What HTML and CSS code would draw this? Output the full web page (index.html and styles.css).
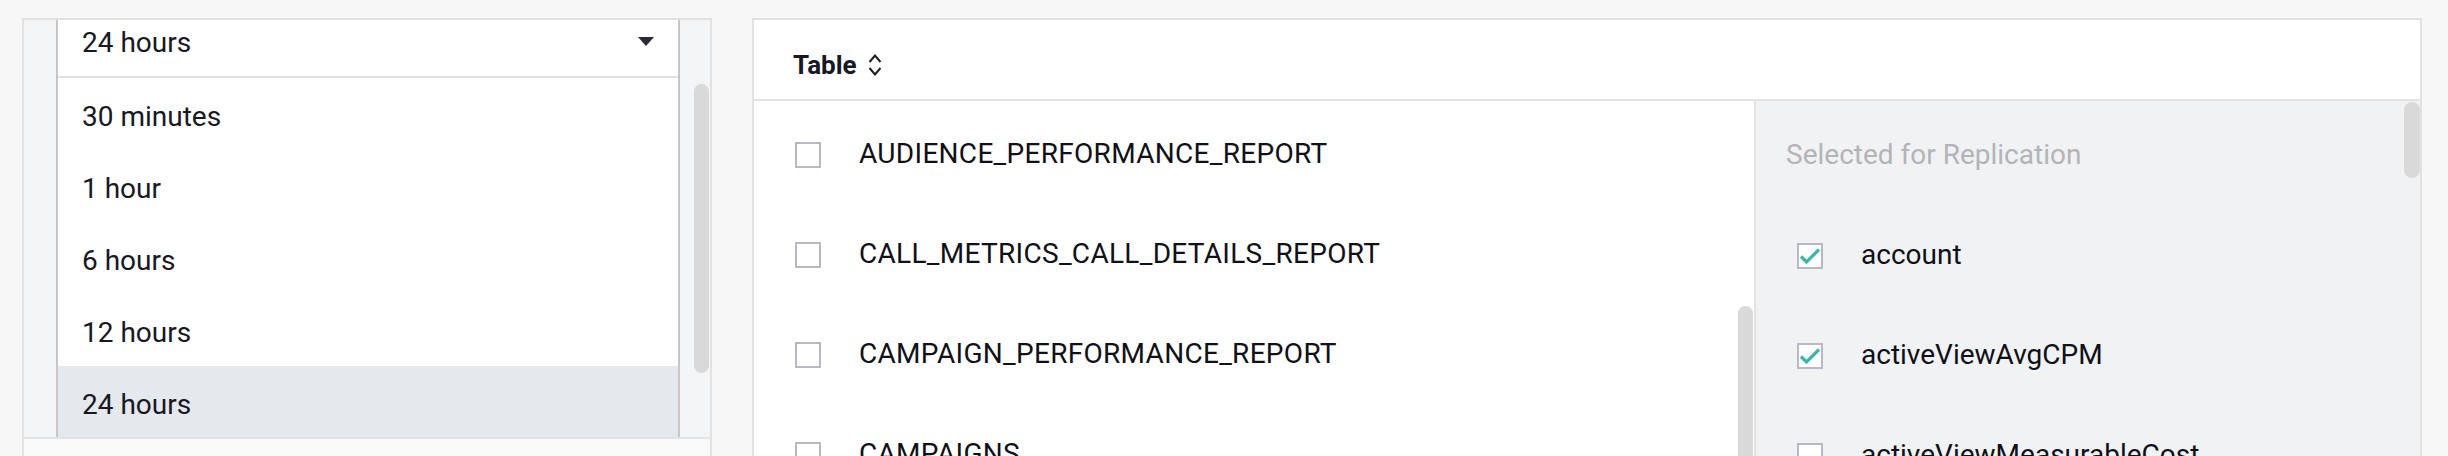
FILE: index.html
```html
<!DOCTYPE html>
<html>
<head>
    <title>Replication Settings</title>
    <link rel="stylesheet" href="styles.css">
</head>
<body>
    <div class="page">
        <div class="side-column">
            <div class="range-panel">
                <div class="range-scroll">
                    <div class="range-gutter"></div>
                    <div class="range-select">
                        <div class="select-head">
                            <span>24 hours</span>
                            <svg class="select-caret" width="16" height="10" viewBox="0 0 16 10"><path d="M0 0 H16 L8 9 Z" fill="#2b2b38"/></svg>
                        </div>
                        <div class="select-option">30 minutes</div>
                        <div class="select-option">1 hour</div>
                        <div class="select-option">6 hours</div>
                        <div class="select-option">12 hours</div>
                        <div class="select-option selected">24 hours</div>
                    </div>
                    <div class="range-track">
                        <div class="thumb range-thumb"></div>
                    </div>
                </div>
            </div>
            <div class="panel-foot"></div>
        </div>

        <div class="table-panel">
            <div class="table-head">
                <span>Table</span>
                <svg class="sort-icon" width="16" height="26" viewBox="0 0 16 26"><path d="M2.5 10 L8 3.5 L13.5 10 M2.5 16 L8 22.5 L13.5 16" fill="none" stroke="#1c1c28" stroke-width="2"/></svg>
            </div>
            <div class="table-body">
                <div class="table-list">
                    <div class="rows">
                        <div class="row"><span class="box"></span><span class="upper">AUDIENCE_PERFORMANCE_REPORT</span></div>
                        <div class="row"><span class="box"></span><span class="upper">CALL_METRICS_CALL_DETAILS_REPORT</span></div>
                        <div class="row"><span class="box"></span><span class="upper">CAMPAIGN_PERFORMANCE_REPORT</span></div>
                        <div class="row"><span class="box"></span><span class="upper">CAMPAIGNS</span></div>
                    </div>
                    <div class="list-track">
                        <div class="thumb list-thumb"></div>
                    </div>
                </div>
                <div class="field-pane">
                    <div class="rows">
                        <div class="row pane-title">Selected for Replication</div>
                        <div class="row"><span class="box checked"><svg width="22" height="22" viewBox="0 0 22 22"><path d="M2 11.5 L7.5 17 L20 4.5" fill="none" stroke="#3bb7a9" stroke-width="3.2"/></svg></span><span>account</span></div>
                        <div class="row"><span class="box checked"><svg width="22" height="22" viewBox="0 0 22 22"><path d="M2 11.5 L7.5 17 L20 4.5" fill="none" stroke="#3bb7a9" stroke-width="3.2"/></svg></span><span>activeViewAvgCPM</span></div>
                        <div class="row"><span class="box"></span><span>activeViewMeasurableCost</span></div>
                    </div>
                    <div class="pane-track">
                        <div class="thumb pane-thumb"></div>
                    </div>
                </div>
            </div>
        </div>
    </div>
</body>
</html>
```

FILE: styles.css
```css
body {
    margin: 0;
    background-color: #f7f7f7;
    font-family: Roboto, "Noto Sans", sans-serif;
    color: #181824;
    overflow: hidden;
}
.page {
    display: flex;
    gap: 40px;
    height: 456px;
    padding: 18px 26px 0 22px;
    box-sizing: border-box;
    overflow: hidden;
}
.side-column {
    width: 690px;
    flex-shrink: 0;
    display: flex;
    flex-direction: column;
}
.range-panel {
    border: 2px solid #e2e2e2;
    background-color: #f4f5f7;
    height: 421px;
    box-sizing: border-box;
}
.range-scroll {
    display: flex;
    height: 100%;
    overflow: hidden;
}
.range-gutter {
    width: 32px;
    flex-shrink: 0;
}
.range-select {
    width: 624px;
    flex-shrink: 0;
    margin-top: -16px;
    background-color: white;
    border-left: 2px solid #c6c6c6;
    border-right: 2px solid #c6c6c6;
    box-sizing: border-box;
    align-self: flex-start;
}
.select-head,
.select-option {
    height: 72px;
    display: flex;
    align-items: center;
    padding: 4px 24px 0 24px;
    box-sizing: border-box;
    font-size: 28px;
}
.select-head {
    height: 74px;
    justify-content: space-between;
    border-bottom: 2px solid #e0e0e0;
}
.select-option.selected {
    background-color: #e5e8ec;
}
.range-track {
    width: 30px;
    flex-shrink: 0;
}
.thumb {
    background-color: #d9d9d9;
    border-radius: 8px;
}
.range-thumb {
    width: 15px;
    height: 289px;
    margin: 64px 0 0 14px;
}
.panel-foot {
    flex: 1;
    border-left: 2px solid #e2e2e2;
    border-right: 2px solid #e2e2e2;
    background-color: #f9f9f9;
}
.table-panel {
    flex: 1;
    border: 2px solid #e2e2e2;
    border-bottom: none;
    background-color: white;
    display: flex;
    flex-direction: column;
}
.table-head {
    height: 81px;
    box-sizing: border-box;
    border-bottom: 2px solid #e2e2e2;
    display: flex;
    align-items: center;
    gap: 10px;
    padding: 10px 0 0 39px;
    font-size: 26px;
    font-weight: 700;
}
.table-body {
    flex: 1;
    display: flex;
    overflow: hidden;
}
.table-list {
    width: 1000px;
    flex-shrink: 0;
    display: flex;
}
.rows {
    flex: 1;
    padding-top: 2px;
}
.row {
    height: 100px;
    display: flex;
    align-items: center;
    gap: 38px;
    padding-left: 41px;
    font-size: 28px;
    color: #101018;
}
.row .box {
    margin-top: 3px;
}
.upper {
    letter-spacing: 0.3px;
}
.box {
    width: 26px;
    height: 26px;
    box-sizing: border-box;
    border: 2px solid #b9b9c5;
    background-color: white;
    flex-shrink: 0;
    display: flex;
    align-items: center;
    justify-content: center;
}
.list-track {
    width: 16px;
    flex-shrink: 0;
}
.list-thumb {
    width: 15px;
    height: 400px;
    margin-top: 205px;
}
.field-pane {
    flex: 1;
    display: flex;
    border-left: 2px solid #e2e2e2;
    background-color: #f1f2f4;
}
.field-pane .rows {
    padding-top: 3px;
}
.pane-title {
    padding-left: 30px;
    color: #b4b4b8;
}
.pane-track {
    width: 16px;
    flex-shrink: 0;
}
.pane-thumb {
    width: 16px;
    height: 76px;
    margin-top: 1px;
}
```
